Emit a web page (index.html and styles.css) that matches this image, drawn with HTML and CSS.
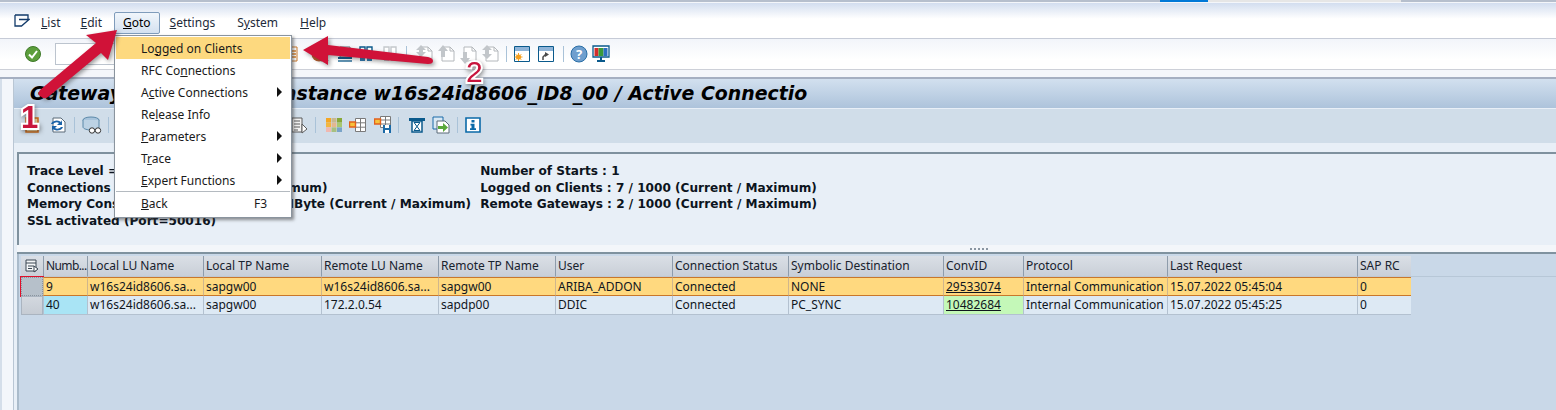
FILE: index.html
```html
<!DOCTYPE html>
<html lang="en">
<head>
<meta charset="utf-8">
<title>Gateway Monitor</title>
<link rel="stylesheet" href="styles.css">
</head>
<body>
<svg class="defs" width="0" height="0" aria-hidden="true">
  <symbol id="i-page" viewBox="0 0 18 18"><path d="M4 2h8l4 4v10H4z" fill="#fff" stroke="#b4b8bc"/><path d="M12 2v4h4" fill="none" stroke="#b4b8bc"/></symbol>
  <symbol id="i-window" viewBox="0 0 18 18"><path d="M1.5 1.5h15v15h-15z" fill="#fff" stroke="#0a5a8c"/><path d="M2 2h14v4H2z" fill="#8fb4d8"/></symbol>
</svg>

<div class="strip"><span class="strip-a"></span><span class="strip-b"></span><span class="strip-c"></span><span class="strip-d"></span></div>

<nav class="menubar">
  <svg class="menu-icon" width="16" height="14" viewBox="0 0 16 14"><path d="M1 1h13v4.500M1 1v11h6.500l7.500-6.500H5" fill="none" stroke="#123a6a" stroke-width="1.300"/></svg>
  <span class="menu-item m-list"><u>L</u>ist</span>
  <span class="menu-item m-edit"><u>E</u>dit</span>
  <span class="menu-item m-goto"><u>G</u>oto</span>
  <span class="menu-item m-settings"><u>S</u>ettings</span>
  <span class="menu-item m-system">S<u>y</u>stem</span>
  <span class="menu-item m-help"><u>H</u>elp</span>
</nav>

<div class="toolbar">
  <svg class="ic check" width="16" height="16" viewBox="0 0 16 16"><circle cx="8" cy="8" r="7.500" fill="#5c9e3c" stroke="#3f7a2a"/><path d="M4 8.500l3 3 5-6.500" fill="none" stroke="#fff" stroke-width="2"/></svg>
  <span class="cmd-field"></span>
  <svg class="ic t-a" width="12" height="18" viewBox="0 0 12 18"><path d="M1 2h9v14H1z" fill="#fff" stroke="#c9782c"/><path d="M3 6h6M3 9h6M3 12h6" stroke="#d8812c" stroke-width="1.500"/></svg>
  <svg class="ic t-b" width="20" height="18" viewBox="0 0 20 18"><circle cx="8" cy="9" r="7.500" fill="#b4592a"/><path d="M10 10l7 6M17 10l-7 6" stroke="#5a3020" stroke-width="1.500"/></svg>
  <svg class="ic t-c" width="16" height="18" viewBox="0 0 16 18"><path d="M3 2h10v10H3z" fill="#fff" stroke="#5a6a78"/><path d="M1 13h14" stroke="#0a5a8c" stroke-width="2"/><path d="M1 16h14" stroke="#0a5a8c" stroke-width="1.300"/></svg>
  <svg class="ic t-d" width="14" height="16" viewBox="0 0 14 16"><path d="M1 1h5v7H1zM8 1h5v7H8z" fill="#fff" stroke="#0a5a8c" stroke-width="1.400"/><path d="M1 9h5v6H1zM8 9h5v6H8z" fill="#2d78ae"/></svg>
  <svg class="ic t-e" width="14" height="16" viewBox="0 0 14 16"><path d="M1 1h5v7H1zM8 1h5v7H8z" fill="#fff" stroke="#c4c8cc" stroke-width="1.400"/><path d="M1 9h5v6H1zM8 9h5v6H8z" fill="#c4c8cc"/></svg>
  <span class="sep s-1"></span>
  <span class="nav-ic n-1"><svg width="18" height="18"><use href="#i-page"/></svg><svg class="nav-arrow" width="12" height="14" viewBox="0 0 12 14"><path d="M6 1l5 5H8v2h3L6 13 1 8h3V6H1z" fill="#c2c6ca"/></svg></span>
  <span class="nav-ic n-2"><svg width="18" height="18"><use href="#i-page"/></svg><svg class="nav-arrow" width="12" height="14" viewBox="0 0 12 14"><path d="M6 1l5 6H8v6H4V7H1z" fill="#c2c6ca"/></svg></span>
  <span class="nav-ic n-3"><svg width="18" height="18"><use href="#i-page"/></svg><svg class="nav-arrow low" width="12" height="14" viewBox="0 0 12 14"><path d="M6 13l5-6H8V1H4v6H1z" fill="#c2c6ca"/></svg></span>
  <span class="nav-ic n-4"><svg width="18" height="18"><use href="#i-page"/></svg><svg class="nav-arrow" width="12" height="16" viewBox="0 0 12 16"><path d="M6 1l5 5H8v4h3l-5 5-5-5h3V6H1z" fill="#c2c6ca"/></svg></span>
  <span class="sep s-2"></span>
  <svg class="ic t-f" width="18" height="18" viewBox="0 0 18 18"><path d="M1.500 1.500h15v15h-15z" fill="#fff" stroke="#0a5a8c"/><path d="M2 2h14v4H2z" fill="#8fb4d8"/><circle cx="5.500" cy="12" r="2.500" fill="#f6a01e"/><path d="M5.500 8v8M1.500 12h8M2.700 9.200l5.600 5.600M8.300 9.200l-5.600 5.600" stroke="#f6a01e"/></svg>
  <svg class="ic t-g" width="18" height="18" viewBox="0 0 18 18"><use href="#i-window"/><path d="M8 7l4 2.500L8 12z" fill="#4a4a4a"/><path d="M6 15v-3l2.500-2.500" fill="none" stroke="#4a4a4a" stroke-width="1.500"/></svg>
  <span class="sep s-3"></span>
  <svg class="ic t-h" width="18" height="18" viewBox="0 0 18 18"><circle cx="9" cy="9" r="8" fill="#6f9fce" stroke="#2a6ea6"/><text class="help-q" x="9" y="13.500">?</text></svg>
  <svg class="ic t-i" width="18" height="18" viewBox="0 0 18 18"><path d="M1 1h16v11H1z" fill="#fff" stroke="#0a5a8c" stroke-width="1.300"/><path d="M2.500 3h4v8h-4z" fill="#d32c2c"/><path d="M6.500 3h5v8h-5z" fill="#3a9a3a"/><path d="M11.500 3h4v8h-4z" fill="#2d6fc0"/><path d="M9 12v3M5 16h8" stroke="#0a5a8c" stroke-width="2"/></svg>
</div>

<div class="sub-strip"></div>

<div class="main">
  <div class="gutter"></div>
  <div class="content">
    <h1 class="title">Gateway Monitor&nbsp;&nbsp;: for Instance w16s24id8606_ID8_00 / Active Connectio</h1>
    <div class="app-toolbar">
      <svg class="ic a-a" width="16" height="16" viewBox="0 0 16 16"><path d="M2 1h12v14H2z" fill="#f8d9a0" stroke="#d06a14" stroke-width="1.500"/><circle cx="8" cy="8" r="3.500" fill="#2d78ae"/></svg>
      <svg class="ic a-b" width="18" height="18" viewBox="0 0 18 18"><path d="M4 2h8l4 4v10H4z" fill="#fff" stroke="#5a6a78"/><path d="M2 8a6 5 0 0 1 10-2l1-2v5H8l2-2a4 3 0 0 0-6 1zM14 11a6 5 0 0 1-10 2l-1 2v-5h5l-2 2a4 3 0 0 0 6-1z" fill="#1a62a8"/></svg>
      <span class="sep s-4"></span>
      <svg class="ic a-c" width="20" height="20" viewBox="0 0 20 20"><ellipse cx="9" cy="5" rx="8" ry="3" fill="#a8c4dc" stroke="#5a88a8"/><path d="M1 5v7c0 2 5 3 8 3s8-1 8-3V5" fill="#bcd2e4" stroke="#5a88a8"/><circle cx="10" cy="15.500" r="2.700" fill="#fff" stroke="#333"/><circle cx="16" cy="15.500" r="2.700" fill="#fff" stroke="#333"/></svg>
      <span class="sep s-5"></span>
      <svg class="ic a-d" width="18" height="18" viewBox="0 0 18 18"><path d="M2 2h10v14H2z" fill="#f2f2f2" stroke="#5a5a5a"/><path d="M4 5h6M4 8h6M4 11h6M4 14h4" stroke="#5a5a5a"/><path d="M12 8l5 5-5 4z" fill="#fff" stroke="#5a5a5a"/></svg>
      <span class="sep s-6"></span>
      <svg class="ic a-e" width="16" height="14" viewBox="0 0 16 14"><path d="M0 0h5v4.600H0z" fill="#f4a623"/><path d="M5.500 0h5v4.600h-5z" fill="#c8b890"/><path d="M11 0h5v4.600h-5z" fill="#88a838"/><path d="M0 4.700h5v4.600H0z" fill="#f2b640"/><path d="M5.500 4.700h5v4.600h-5z" fill="#e4b890"/><path d="M11 4.700h5v4.600h-5z" fill="#a8c870"/><path d="M0 9.400h5V14H0z" fill="#f0b8b0"/><path d="M5.500 9.400h5V14h-5z" fill="#a8c080"/><path d="M11 9.400h5V14h-5z" fill="#7aa4c8"/></svg>
      <svg class="ic a-f" width="17" height="14" viewBox="0 0 17 14"><path d="M6.500.500h10v13h-10zM11.500.500v13M6.500 4.800h10M6.500 9.200h10" fill="#fff" stroke="#7a7a7a"/><path d="M.500 4h6v5h-6z" fill="#f6c23c" stroke="#e2601c" stroke-width="1.400"/></svg>
      <svg class="ic a-g" width="18" height="18" viewBox="0 0 18 18"><path d="M6.500.500h10v11h-10zM11.500.500v11M6.500 4h10M6.500 8h10" fill="#fff" stroke="#7a7a7a"/><path d="M.500 3h6v5h-6z" fill="#f6c23c" stroke="#e2601c" stroke-width="1.400"/><path d="M9 9h8v8H9z" fill="#1a6aa8"/><path d="M11 9h4v3h-4zM11 14h4v3h-4z" fill="#fff"/></svg>
      <span class="sep s-7"></span>
      <svg class="ic a-h" width="16" height="16" viewBox="0 0 16 16"><path d="M0 1h16v3H0z" fill="#0a5a8c"/><path d="M3 4h10v11H3z" fill="#fff" stroke="#0a5a8c" stroke-width="1.500"/><path d="M5 5.500h6L5 13.500h6z" fill="none" stroke="#0a5a8c"/></svg>
      <svg class="ic a-i" width="18" height="18" viewBox="0 0 18 18"><path d="M1 1h10v12H1z" fill="#d8e8f4" stroke="#1a6aa8"/><path d="M5 5h8l4 4v8H5z" fill="#fff" stroke="#5a6a78"/><path d="M6 10h5V7l5 4.500L11 16v-3H6z" fill="#5aa83c"/></svg>
      <span class="sep s-8"></span>
      <svg class="ic a-j" width="16" height="16" viewBox="0 0 16 16"><path d="M1 1h14v14H1z" fill="#fff" stroke="#0a6aa8" stroke-width="1.600"/><path d="M6.500 3h3v2.500h-3zM5.500 6.800h4v4.400h1.500V13H5v-1.800h1.500V8.400h-1z" fill="#0a6aa8"/></svg>
    </div>
    <section class="info">
      <div class="info-col info-left">
        <div>Trace Level = 1</div>
        <div>Connections : 9 / 2000&thinsp; (Current / Maximum)</div>
        <div>Memory Consumption : 1212 / 10000 MByte (Current / Maximum)</div>
        <div>SSL activated (Port=50016)</div>
      </div>
      <div class="info-col">
        <div>Number of Starts : 1</div>
        <div>Logged on Clients : 7 / 1000 (Current / Maximum)</div>
        <div>Remote Gateways : 2 / 1000 (Current / Maximum)</div>
      </div>
    </section>
    <div class="splitter"><span class="grip"></span></div>
    <section class="grid-area">
      <div class="header-line"></div>
      <div class="grid">
        <div class="hc hc-sel"><svg width="14" height="14" viewBox="0 0 14 14"><path d="M1 1h10v11H1z" fill="#f4f6f8" stroke="#3a4652"/><path d="M1 4h10M3 7h6M3 9.500h4" stroke="#3a4652"/><path d="M9 7l4 3-4 3z" fill="#fff" stroke="#3a4652"/></svg></div>
        <div class="hc hc-num">Numb...</div>
        <div class="hc">Local LU Name</div>
        <div class="hc">Local TP Name</div>
        <div class="hc">Remote LU Name</div>
        <div class="hc">Remote TP Name</div>
        <div class="hc">User</div>
        <div class="hc">Connection Status</div>
        <div class="hc">Symbolic Destination</div>
        <div class="hc">ConvID</div>
        <div class="hc">Protocol</div>
        <div class="hc">Last Request</div>
        <div class="hc">SAP RC</div>

        <div class="c sel sel-active"></div>
        <div class="c hot">9</div>
        <div class="c hot">w16s24id8606.sa...</div>
        <div class="c hot">sapgw00</div>
        <div class="c hot">w16s24id8606.sa...</div>
        <div class="c hot">sapgw00</div>
        <div class="c hot">ARIBA_ADDON</div>
        <div class="c hot">Connected</div>
        <div class="c hot">NONE</div>
        <div class="c hot link">29533074</div>
        <div class="c hot">Internal Communication</div>
        <div class="c hot">15.07.2022 05:45:04</div>
        <div class="c hot">0</div>

        <div class="c sel"></div>
        <div class="c cyan">40</div>
        <div class="c">w16s24id8606.sa...</div>
        <div class="c">sapgw00</div>
        <div class="c">172.2.0.54</div>
        <div class="c">sapdp00</div>
        <div class="c">DDIC</div>
        <div class="c">Connected</div>
        <div class="c">PC_SYNC</div>
        <div class="c green link">10482684</div>
        <div class="c">Internal Communication</div>
        <div class="c">15.07.2022 05:45:25</div>
        <div class="c">0</div>
      </div>
    </section>
  </div>
</div>

<div class="goto-menu">
  <div class="mi active"><span>Lo<u>g</u>ged on Clients</span></div>
  <div class="mi"><span>RFC Co<u>n</u>nections</span></div>
  <div class="mi"><span>A<u>c</u>tive Connections</span><i class="tri"></i></div>
  <div class="mi"><span>Re<u>l</u>ease Info</span></div>
  <div class="mi"><span><u>P</u>arameters</span><i class="tri"></i></div>
  <div class="mi"><span>T<u>r</u>ace</span><i class="tri"></i></div>
  <div class="mi"><span><u>E</u>xpert Functions</span><i class="tri"></i></div>
  <div class="mi-sep"></div>
  <div class="mi"><span><u>B</u>ack</span><em class="key">F3</em></div>
</div>

<svg class="arrows" width="1556" height="410" viewBox="0 0 1556 410" aria-hidden="true">
  <path class="arrow" d="M117 30L86 35L96 43L40 90Q37 94 40 96L43 98Q45 99 48 97L101 53L108 60Z"/>
  <path class="arrow" d="M303 50L328 36L328 45L428 57Q433 58 433 61Q433 64 428 64L328 55L328 65Z"/>
</svg>
<span class="badge b-1">1</span>
<span class="badge b-2">2</span>
</body>
</html>
```

FILE: styles.css
```css
html, body {
  margin: 0;
  padding: 0;
}
body {
  position: relative;
  width: 1556px;
  height: 410px;
  overflow: hidden;
  display: flex;
  flex-direction: column;
  background: #c9d8e8;
  color: #111;
  font-family: "Noto Sans", "Open Sans", sans-serif;
  font-size: 12px;
}
.defs { position: absolute; }
.ic { flex: none; display: block; }

/* window strip */
.strip { display: flex; height: 3px; flex: none; background: #f4f6fa; }
.strip span { height: 2px; display: block; }
.strip-a { width: 1160px; background: #b6bfcd; }
.strip-b { width: 48px; background: #0078d7; }
.strip-c { width: 193px; background: #e6e6e6; }
.strip-d { flex: 1; background: #b6bfcd; }

/* menu bar */
.menubar {
  flex: none;
  height: 36px;
  box-sizing: border-box;
  padding: 10px 0 0 14px;
  display: flex;
  align-items: flex-start;
  background: linear-gradient(#d2ddef, #fff 45%);
  border-bottom: 1px solid #c6cbd7;
}
.menu-icon { margin-top: 1px; }
.menu-item { line-height: 20px; color: #1d2a3a; }
.m-list { margin-left: 11px; }
.m-edit { margin-left: 20px; }
.m-goto {
  margin-left: 12px;
  margin-top: -1px;
  padding: 0 8px;
  border: 1px solid #7f9cbb;
  border-radius: 2px;
  background: linear-gradient(#f1f6fb, #d4e1f0);
  color: #000;
}
.m-settings { margin-left: 10px; }
.m-system { margin-left: 22px; }
.m-help { margin-left: 22px; }

/* toolbar */
.toolbar {
  flex: none;
  height: 31px;
  box-sizing: border-box;
  padding-left: 25px;
  display: flex;
  align-items: center;
  background: linear-gradient(#f2f5fa, #fff 70%);
  border-bottom: 1px solid #cdd0d8;
}
.cmd-field {
  flex: none;
  width: 220px;
  height: 22px;
  margin-left: 14px;
  border: 1px solid #bcc4ce;
  background: #fff;
  box-sizing: border-box;
}
.t-a { margin-left: 12px; }
.t-b { margin-left: 12px; }
.t-c { margin-left: 6px; }
.t-d { margin-left: 6px; }
.t-e { margin-left: 10px; }
.sep { flex: none; width: 1px; height: 16px; background: #a9c2d8; }
.s-1 { margin-left: 9px; }
.nav-ic { position: relative; flex: none; width: 18px; height: 18px; display: block; }
.nav-ic svg { display: block; }
.nav-ic .nav-arrow { position: absolute; left: -1px; top: -1px; }
.nav-ic .low { top: 6px; }
.n-1 { margin-left: 9px; }
.n-2 { margin-left: 4px; }
.n-3 { margin-left: 4px; }
.n-4 { margin-left: 4px; }
.s-2 { margin-left: 6px; }
.t-f { margin-left: 6px; }
.t-g { margin-left: 6px; }
.s-3 { margin-left: 8px; }
.t-h { margin-left: 6px; }
.t-i { margin-left: 4px; }
.help-q {
  fill: #fff;
  font-family: "Noto Sans", sans-serif;
  font-weight: 700;
  font-size: 13px;
  text-anchor: middle;
}

.sub-strip {
  flex: none;
  height: 9px;
  background: #f4f6fa;
  border-bottom: 2px solid #a5afc1;
  box-sizing: border-box;
}

/* main */
.main { flex: 1; display: flex; min-height: 0; }
.gutter {
  flex: none;
  width: 14px;
  box-sizing: border-box;
  background: #f3f6fb;
  border-left: 2px solid #d4deea;
  border-right: 1px solid #b9c6d4;
}
.content {
  flex: 1;
  min-width: 0;
  display: flex;
  flex-direction: column;
  background: #e8eff7;
}
.title {
  flex: none;
  margin: 0;
  height: 30px;
  padding-left: 16px;
  line-height: 29px;
  white-space: nowrap;
  overflow: hidden;
  font-family: "DejaVu Sans", sans-serif;
  font-size: 18.900px;
  font-weight: 700;
  font-style: italic;
  color: #000;
  background: linear-gradient(#d2e0ef, #adc3db);
  border-bottom: 1px solid #e8eff7;
  box-sizing: border-box;
}
.app-toolbar {
  flex: none;
  height: 34px;
  padding: 0 0 3px 10px;
  display: flex;
  align-items: center;
  background: #d0dde9;
  box-sizing: border-box;
}
.a-a { margin-left: 0; }
.a-b { margin-left: 9px; }
.s-4 { margin-left: 7px; }
.a-c { margin-left: 7px; }
.s-5 { margin-left: 6px; }
.a-d { flex: none; margin-left: 181px; }
.s-6 { margin-left: 7px; }
.a-e { margin-left: 10px; }
.a-f { margin-left: 7px; }
.a-g { margin-left: 8px; }
.s-7 { margin-left: 6px; }
.a-h { margin-left: 10px; }
.a-i { margin-left: 7px; }
.s-8 { margin-left: 7px; }
.a-j { margin-left: 7px; }

/* info panel */
.info {
  flex: none;
  height: 93px;
  margin: 9px 0 0 3px;
  padding: 9px 0 0 8px;
  box-sizing: border-box;
  display: flex;
  gap: 9px;
  border-top: 2px solid #7f919e;
  border-left: 2px solid #7f919e;
  font-family: "DejaVu Sans", sans-serif;
  font-size: 12.100px;
  font-weight: 700;
  line-height: 16.500px;
  color: #0c1420;
  white-space: nowrap;
}
.splitter {
  flex: none;
  height: 9px;
  margin-left: 3px;
  position: relative;
  background: #f3f6fa;
  border-bottom: 2px solid #7f929f;
  box-sizing: border-box;
}
.grip {
  position: absolute;
  left: 953px;
  top: 3px;
  width: 18px;
  height: 2px;
  background: repeating-linear-gradient(90deg, #8a96a2 0 2px, transparent 2px 4px);
}

/* grid */
.grid-area {
  flex: 1;
  position: relative;
  margin-left: 3px;
  padding: 2px 0 0 2px;
  background: #c9d8e8;
  border-left: 2px solid #aabbcb;
  box-sizing: border-box;
}
.header-line {
  position: absolute;
  left: 0;
  right: 0;
  top: 22px;
  height: 1px;
  background: #b7c7d7;
}
.grid {
  position: relative;
  display: grid;
  width: max-content;
  grid-template-columns: 22px 44px 116px 118px 117px 117px 117px 116px 155px 80px 144px 190px 54px;
  grid-template-rows: 21px 19px 19px;
  white-space: nowrap;
}
.hc {
  padding-left: 2px;
  line-height: 20px;
  background: linear-gradient(#dadfe6, #c9cfd7);
  border-left: 1px solid #8e9cab;
  border-bottom: 1px solid #c0c8d0;
  color: #18222e;
  box-sizing: border-box;
  overflow: hidden;
}
.hc-num { letter-spacing: -.6px; }
.hc-sel { display: flex; align-items: center; justify-content: center; padding: 0; border-left: 0; }
.c {
  padding-left: 2px;
  line-height: 18px;
  background: #dde9f4;
  border-left: 1px solid #b3c1d0;
  border-bottom: 1px solid #b3c1d0;
  color: #10161e;
  box-sizing: border-box;
  overflow: hidden;
}
.hot {
  background: #ffd97f;
  border-top: 1px solid #c9772a;
  border-bottom: 1px solid #c9772a;
  border-left-color: #d0b68c;
  line-height: 17px;
}
.cyan { background: #a9e4f5; }
.green { background: #c4f8b8; }
.link { text-decoration: underline; }
.sel {
  background: linear-gradient(#d3d8df, #c6ccd4);
  border: 1px solid #aab4c0;
  padding: 0;
}
.sel-active {
  background: #b6c0ca;
  border: 1px dotted #8a949e;
  outline: 1px solid #e0102a;
}

/* goto dropdown */
.goto-menu {
  position: absolute;
  left: 114px;
  top: 35px;
  width: 178px;
  height: 183px;
  padding: 1px;
  box-sizing: border-box;
  background: #fff;
  border: 1px solid #8a949e;
  box-shadow: 2px 2px 3px rgba(60, 60, 60, .55);
  z-index: 2;
}
.mi {
  display: flex;
  justify-content: space-between;
  align-items: center;
  height: 22px;
  box-sizing: border-box;
  padding: 0 8px 0 25px;
  color: #1a1a1a;
}
.mi.active { background: #fdd97f; }
.mi-sep { height: 1px; background: #b4bac0; }
.tri {
  width: 0;
  height: 0;
  border-left: 5px solid #111;
  border-top: 5px solid transparent;
  border-bottom: 5px solid transparent;
}
.key { font-style: normal; margin-right: 15px; }

/* annotations */
.arrows {
  position: absolute;
  left: 0;
  top: 0;
  z-index: 3;
  pointer-events: none;
  filter: drop-shadow(2px 2px 2px rgba(40, 40, 40, .45));
}
.arrow { fill: #d01238; }
.badge {
  position: absolute;
  z-index: 4;
  font-family: "Liberation Sans", sans-serif;
  color: #c8143c;
  paint-order: stroke fill;
  -webkit-text-stroke: 4px #fff;
  line-height: 1;
  filter: drop-shadow(1px 2px 2px rgba(40, 40, 40, .5));
}
.b-1 { left: 21px; top: 102px; font-size: 31px; font-weight: 700; }
.b-2 { left: 466px; top: 57px; font-size: 30px; }
```
